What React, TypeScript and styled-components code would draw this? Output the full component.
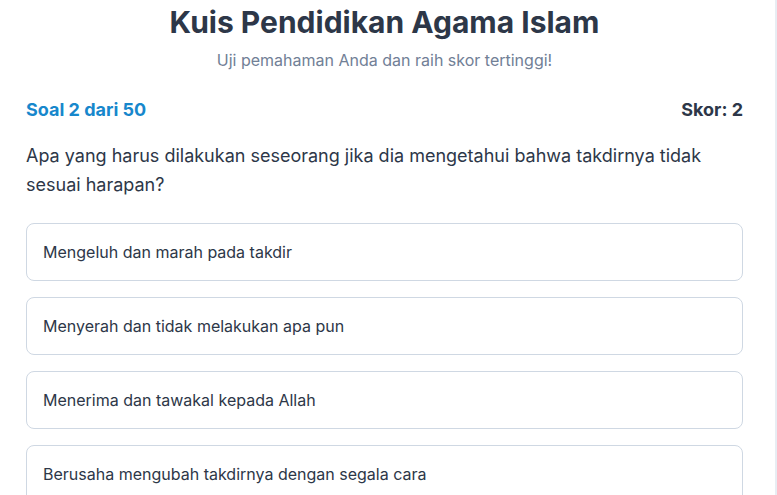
import React from "react";
import styled, { createGlobalStyle } from "styled-components";

const GlobalStyle = createGlobalStyle`
  html, body {
    margin: 0;
    padding: 0;
    background: #e8edf3;
    font-family: Inter, "Noto Sans", sans-serif;
    overflow: hidden;
  }
`;

const Card = styled.main`
  width: 775px;
  min-height: 495px;
  box-sizing: border-box;
  background: #ffffff;
  padding: 2px 32px 0 26px;
`;

const Header = styled.header`
  text-align: center;
`;

const Title = styled.h1`
  margin: 0;
  font-size: 30px;
  line-height: 40px;
  font-weight: 700;
  color: #2d3748;
`;

const Subtitle = styled.p`
  margin: 6px 0 0;
  font-size: 16px;
  line-height: 24px;
  color: #718096;
`;

const StatusBar = styled.div`
  display: flex;
  justify-content: space-between;
  align-items: center;
  margin-top: 26px;
  font-size: 18px;
  line-height: 24px;
  font-weight: 700;
`;

const Progress = styled.span`
  color: #1787cc;
`;

const Score = styled.span`
  color: #2d3748;
`;

const Question = styled.p`
  margin: 19px 0 0;
  font-size: 18px;
  line-height: 29px;
  color: #2d3748;
`;

const Options = styled.div`
  display: flex;
  flex-direction: column;
  gap: 16px;
  margin-top: 24px;
`;

const Option = styled.button`
  display: flex;
  align-items: center;
  height: 58px;
  box-sizing: border-box;
  padding: 0 16px;
  border: 1px solid #cfd8e3;
  border-radius: 8px;
  background: #ffffff;
  font-family: inherit;
  font-size: 16px;
  color: #2d3748;
  text-align: left;
  cursor: pointer;
`;

const options = [
  "Mengeluh dan marah pada takdir",
  "Menyerah dan tidak melakukan apa pun",
  "Menerima dan tawakal kepada Allah",
  "Berusaha mengubah takdirnya dengan segala cara",
];

export default function App() {
  return (
    <>
      <GlobalStyle />
      <Card>
        <Header>
          <Title>Kuis Pendidikan Agama Islam</Title>
          <Subtitle>Uji pemahaman Anda dan raih skor tertinggi!</Subtitle>
        </Header>
        <StatusBar>
          <Progress>Soal 2 dari 50</Progress>
          <Score>Skor: 2</Score>
        </StatusBar>
        <Question>
          Apa yang harus dilakukan seseorang jika dia mengetahui bahwa takdirnya tidak sesuai harapan?
        </Question>
        <Options>
          {options.map((o) => (
            <Option key={o}>{o}</Option>
          ))}
        </Options>
      </Card>
    </>
  );
}
